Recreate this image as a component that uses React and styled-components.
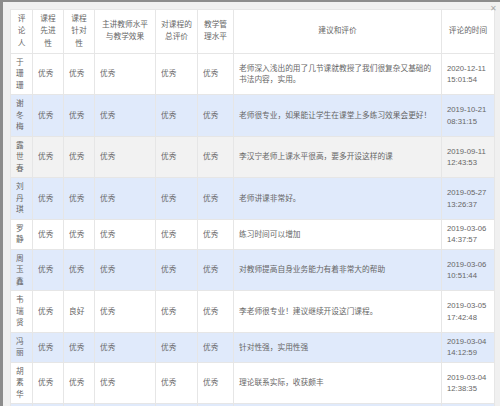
import React from 'react'
import styled, {createGlobalStyle} from 'styled-components'

const Global = createGlobalStyle`
  html, body { margin: 0; padding: 0; }
  body {
    background: #8c8c8c;
    font-family: "Liberation Sans", "Noto Sans CJK SC", sans-serif;
    overflow: hidden;
  }
`

const Layer = styled.div`
  position: relative;
  margin: 2px 0 0 3px;
  height: 404px;
  background: #f0f0f0;
  padding: 7px 6px 0 7px;
  box-sizing: border-box;
  overflow: hidden;
`

const Close = styled.span`
  position: absolute;
  top: 3px;
  right: 3px;
  font-size: 8px;
  line-height: 8px;
  color: #a8a8a8;
`

const Table = styled.table`
  width: 484px;
  table-layout: fixed;
  border-collapse: collapse;
  background: #fff;
  color: #666;
  font-size: 7.7px;
  line-height: 11.5px;
`

const Th = styled.th`
  font-weight: normal;
  text-align: center;
  padding: 3px 5px;
  border: 1px solid #e6e6e6;
  line-height: 12.3px;
  word-break: break-all;
`

const Row = styled.tr`
  background: ${p => p.$tone === 'blue' ? '#e0eafb' : p.$tone === 'grey' ? '#f2f2f2' : '#fff'};
`

const PeekRow = styled.tr`
  background: #e0eafb;
  height: 30px;
`

const Td = styled.td`
  padding: 3px 5px;
  border: 1px solid #e6e6e6;
  text-align: left;
  vertical-align: middle;
  word-break: break-all;
`

const widths = [22, 31, 31, 61, 42, 36, 208, 53]

const heads = ['评论人', '课程先进性', '课程针对性', '主讲教师水平与教学效果', '对课程的总评价', '教学管理水平', '建议和评价', '评论的时间']

const rows = [
  ['于珊珊', '优秀', '优秀', '优秀', '优秀', '优秀', '老师深入浅出的用了几节课就教授了我们很复杂又基础的书法内容，实用。', '2020-12-11 15:01:54', 'white'],
  ['谢冬梅', '优秀', '优秀', '优秀', '优秀', '优秀', '老师很专业，如果能让学生在课堂上多练习效果会更好！', '2019-10-21 08:31:15', 'blue'],
  ['露世春', '优秀', '优秀', '优秀', '优秀', '优秀', '李汉宁老师上课水平很高，要多开设这样的课', '2019-09-11 12:43:53', 'grey'],
  ['刘丹琪', '优秀', '优秀', '优秀', '优秀', '优秀', '老师讲课非常好。', '2019-05-27 13:26:37', 'blue'],
  ['罗静', '优秀', '优秀', '优秀', '优秀', '优秀', '练习时间可以增加', '2019-03-06 14:37:57', 'white'],
  ['周玉鑫', '优秀', '优秀', '优秀', '优秀', '优秀', '对教师提高自身业务能力有着非常大的帮助', '2019-03-06 10:51:44', 'blue'],
  ['韦瑞贤', '优秀', '良好', '优秀', '优秀', '优秀', '李老师很专业！建议继续开设这门课程。', '2019-03-05 17:42:48', 'white'],
  ['冯丽', '优秀', '优秀', '优秀', '优秀', '优秀', '针对性强，实用性强', '2019-03-04 14:12:59', 'blue'],
  ['胡素华', '优秀', '优秀', '优秀', '优秀', '优秀', '理论联系实际，收获颇丰', '2019-03-04 12:38:35', 'white'],
]

const App = () => (
  <Layer>
    <Global />
    <Close>✕</Close>
    <Table>
      <colgroup>
        {widths.map((w, i) => <col key={i} style={{width: w}} />)}
      </colgroup>
      <thead>
        <tr>
          {heads.map(h => <Th key={h}>{h}</Th>)}
        </tr>
      </thead>
      <tbody>
        {rows.map(r => (
          <Row key={r[0]} $tone={r[8]}>
            {r.slice(0, 8).map((c, i) => <Td key={i}>{c}</Td>)}
          </Row>
        ))}
        <PeekRow>
          {widths.map((w, i) => <Td key={i} />)}
        </PeekRow>
      </tbody>
    </Table>
  </Layer>
)

export default App
